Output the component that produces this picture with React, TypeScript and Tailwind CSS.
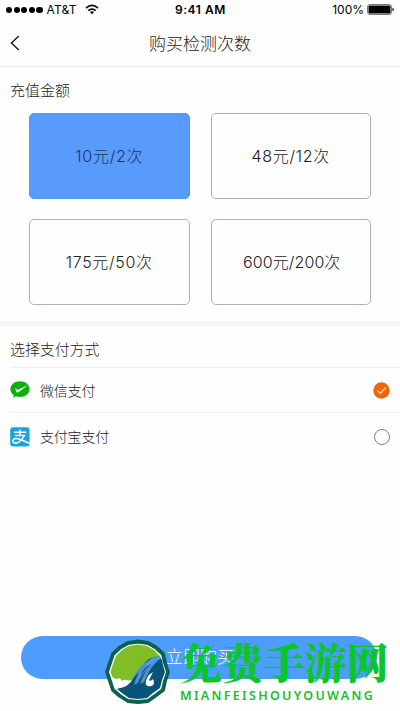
import clsx from "clsx";

const plans = ["10元/2次", "48元/12次", "175元/50次", "600元/200次"];

const StatusBar = () => (
  <div className="relative flex h-5 items-center justify-between pl-[6px] pr-[6px] font-['Inter',sans-serif] text-[12px] text-black">
    <div className="flex items-center">
      <div className="flex gap-[1.4px]">
        {[...Array(5)].map((_, i) => (
          <span key={i} className="size-[6.2px] rounded-full bg-black" />
        ))}
      </div>
      <span className="ml-1 w-[32px] whitespace-nowrap tracking-[0.2px]">AT&amp;T</span>
      <svg width="14" height="11" viewBox="0 0 14 11" className="ml-[6px] -mt-[2px]" fill="none" stroke="#000" strokeWidth="1.7">
        <path d="M1 4.1Q7 -1.2 13 4.1" />
        <path d="M3.3 6.6Q7 3.5 10.7 6.6" />
        <path d="M4.9 8.1Q7 6.5 9.1 8.1L7 10.3Z" fill="#000" stroke="none" />
      </svg>
    </div>
    <span className="absolute left-[175px] whitespace-nowrap font-semibold tracking-[0.55px]">9:41 AM</span>
    <div className="flex items-center">
      <span className="mr-[3px]">100%</span>
      <svg width="27" height="11" viewBox="0 0 27 11" className="-mt-[2px]">
        <rect x="0.5" y="0.5" width="24" height="10" rx="2.2" fill="#fff" stroke="#555" strokeWidth="0.8" />
        <rect x="1.5" y="1.4" width="22" height="8.2" rx="1.2" />
        <path d="M25.5 3.5Q28 5.5 25.5 7.5Z" />
      </svg>
    </div>
  </div>
);

const WechatIcon = () => (
  <svg width="20" height="18" viewBox="0 0 20 18">
    <path
      d="M10 0.3C15.4 0.3 19.6 3.8 19.6 8.3S15.4 16 10 16Q7.8 16 5.9 15.2L3.4 17L3.7 14.1C1.6 12.7 0.4 10.6 0.4 8.3C0.4 3.8 4.6 0.3 10 0.3Z"
      fill="#0eaf10"
    />
    <path d="M5 6.8L7.8 8.9L18.1 4L8 11.5Q7.1 11.9 6.6 10.9Z" fill="#fff" />
  </svg>
);

const AlipayIcon = () => (
  <svg width="20" height="20" viewBox="0 0 20 20">
    <rect x="0.2" y="0.2" width="19.4" height="19.4" rx="3" fill="#1ba4d8" />
    <g fill="none" stroke="#fff" strokeWidth="1.5">
      <path d="M4 5.2H16M10 2.4V8.4M5 8.5H14.4Q12.4 13 8.8 15.2Q5.6 17 3.4 15.3Q2 13.3 4.2 11.8Q6.4 10.8 9.6 12.2L19.5 16.3" />
    </g>
  </svg>
);

const methods = [
  { name: "微信支付", icon: <WechatIcon />, checked: true },
  { name: "支付宝支付", icon: <AlipayIcon />, checked: false },
];

const Radio = ({ checked }: { checked: boolean }) =>
  checked ? (
    <svg width="17" height="17" viewBox="0 0 17 17">
      <circle cx="8.5" cy="8.5" r="8.2" fill="#ed650c" />
      <path d="M4.3 8.6L7.4 11.3L12.7 5.7" fill="none" stroke="#ffe9bd" strokeWidth="1.2" />
    </svg>
  ) : (
    <span className="size-4 rounded-full border border-[#808080]" />
  );

const Watermark = () => (
  <div className="pointer-events-none absolute left-[104px] top-[638px] h-[66px] w-[290px]">
    <svg width="68" height="66" viewBox="0 0 68 66" className="absolute left-0 top-[1px]">
      <path
        d="M24 4L34 2.5L44 4L52 8.5L59 15L61 24L64 33L61 42L59 51L51 57L44 62L34 63L24 62L16 57L9 51L6 42L3 33L6 24L9 15L16 8.5Z"
        fill="#fff"
        stroke="#08624f"
        strokeWidth="3.8"
        strokeLinejoin="round"
      />
      <path d="M25 7L34 5.5L43 7L50 11L56 17Q46 21 39 28Q33 37 28 41Q25 42 23 41Q20 40 18 42Q16 38 13 40Q10 40 8.5 38L6.5 33L9 25L12 17L18 11Z" fill="#7fbe25" />
      {/* mountain and waves */}
      <path d="M13 50Q24 48 31 37Q36 27 45 20L55 17L58 21L59 26L61 33L58 41L56 49L49 54L43 59L34 60L25 59L18 54Z" fill="#075379" />
      <path d="M26 44Q32 28 47 20L55 17L57 19Q49 25 44 34L39 44L38 41Q42 31 47 25Q38 29 34 41L32 43Q33 35 38 29Q32 32 26 44Z" fill="#4d9cfe" />
      <path d="M28 41Q33 29 47 20Q38 30 36 40Q43 27 57 17Q46 28 40 43L36 45Q40 34 45 27Q38 32 34 44L30 46Q32 38 36 33Q32 35 28 41Z" fill="#4f91c8" />
      <path d="M9 40Q12 41 16 39.5Q18 44 22 43Q26 43 28 41Q24 48 15 49Q11 46 9 40Z" fill="#fff" />
      <path d="M43 39Q40 46 44 47Q49 48 50 44Q50 42 49 40Q47 43 45 41L49 33Q45 35 43 39Z" fill="#fff" />
    </svg>
    <div className="absolute left-[76px] top-[1px] whitespace-nowrap font-['Noto_Serif_CJK_SC','Noto_Sans_CJK_SC',serif] text-[42px] font-black leading-[44px] tracking-[-0.4px] text-[#0bc52c]">
      免费手游网
    </div>
    <div className="absolute left-[76px] top-[50px] whitespace-nowrap font-['Noto_Sans',sans-serif] text-[12.5px] font-semibold leading-[16px] tracking-[2.3px] text-[#20bd2b]">
      MIANFEISHOUYOUWANG
    </div>
  </div>
);

const App = () => {
  return (
    <div className="relative flex h-[711px] w-[400px] flex-col overflow-hidden bg-[#fefefe] font-['Inter','Noto_Sans_CJK_SC',sans-serif] text-[#222]">
      <StatusBar />

      <header className="grid h-[47px] grid-cols-[30px_1fr_30px] items-center border-b border-[#ebebeb]">
        <svg width="10" height="16" viewBox="0 0 10 16" className="ml-[10px]" fill="none" stroke="#111" strokeWidth="1.3">
          <path d="M8.8 1L1.4 8L8.8 15" />
        </svg>
        <h1 className="pt-[2px] text-center text-[17px] font-light leading-6">购买检测次数</h1>
      </header>

      <section className="h-[254px] pt-[13px]">
        <h2 className="ml-[10px] text-[15px] font-light leading-[22px]">充值金额</h2>
        <div className="ml-[29px] mt-[11px] grid w-[342px] grid-cols-2 gap-x-[21px] gap-y-[20px]">
          {plans.map((plan, i) => (
            <button
              key={plan}
              className={clsx(
                "flex h-[86px] items-center justify-center rounded-[5px] border text-[16px] font-light",
                i === 0 ? "border-[#5298f0] bg-[#589bfd] text-[#1d3761]" : "border-[#a5b5c0]",
                i === 3 ? "pl-[2px] tracking-[0.1px]" : "tracking-[0.7px]",
              )}
            >
              {plan}
            </button>
          ))}
        </div>
      </section>

      <div className="h-[5px] bg-[#f5f5f5]" />

      <section>
        <h2 className="ml-[10px] flex h-[42px] items-center border-b border-[#eee] pt-[7px] text-[15px] font-light tracking-[-0.1px]">选择支付方式</h2>
        {methods.map(({ name, icon, checked }) => (
          <div key={name} className="ml-[10px] flex h-[45px] items-center border-b border-[#f0f0f0] pr-[10px] last:h-[47px] last:border-b-0">
            {icon}
            <span className="ml-[10px] flex-1 text-[14px] font-light tracking-[-0.2px]">{name}</span>
            <Radio checked={checked} />
          </div>
        ))}
      </section>

      <button className="ml-[21px] mr-[23px] mb-[32px] mt-auto h-[43px] rounded-full bg-[#4d9cfe] pl-[2px] pt-px text-[17px] font-light text-white">
        立即购买
      </button>

      <Watermark />
    </div>
  );
};

export default App;
